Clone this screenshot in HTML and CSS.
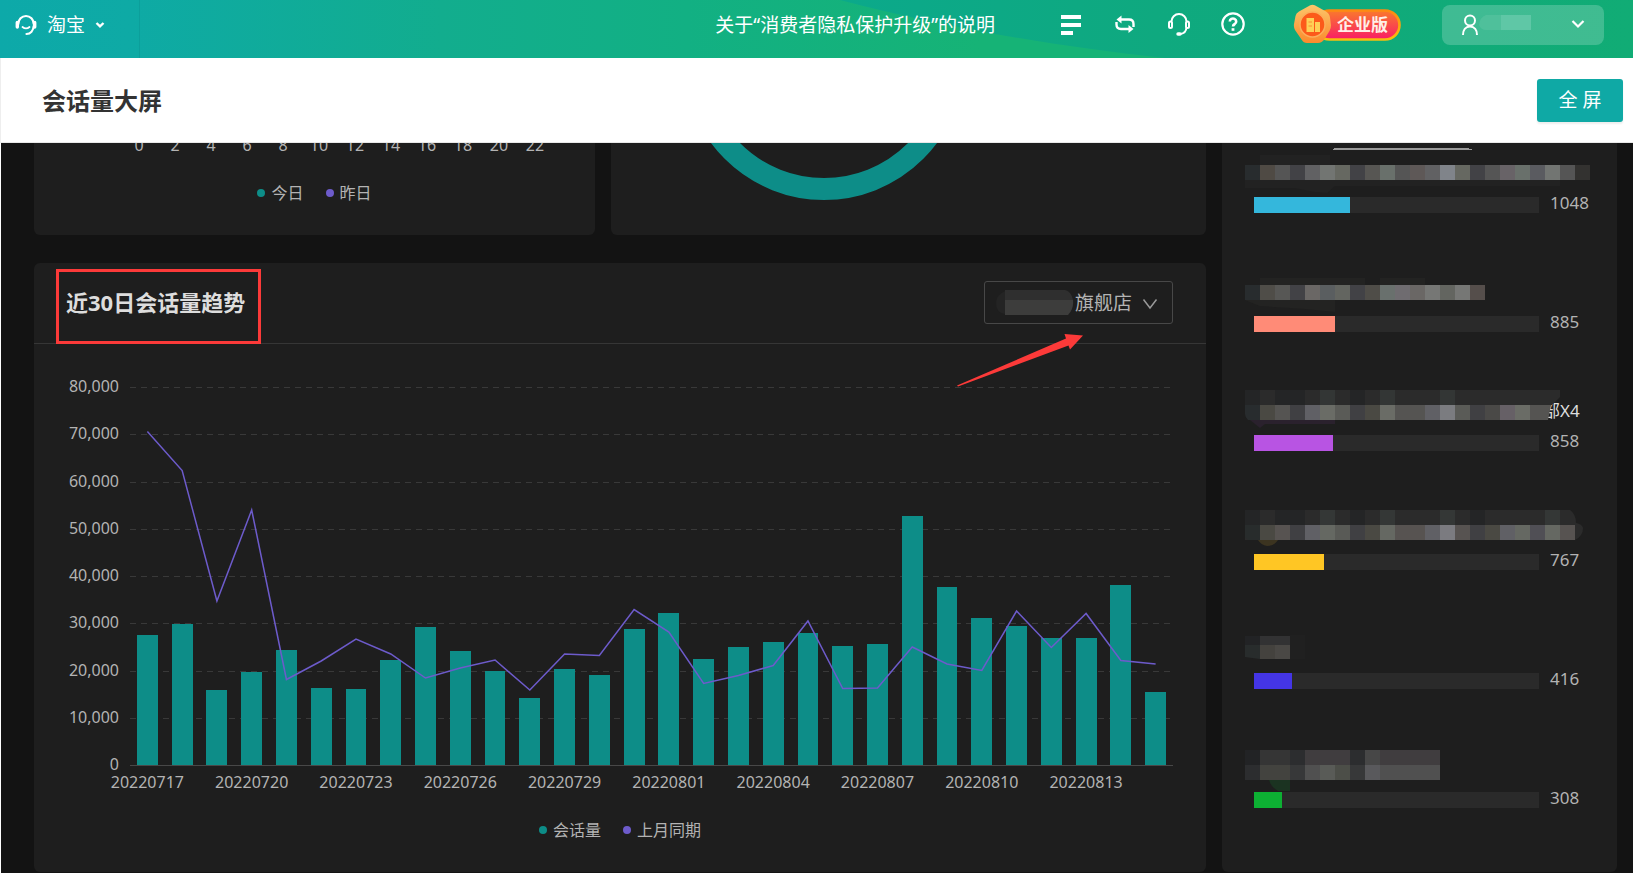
FILE: index.html
```html
<!DOCTYPE html>
<html lang="zh-CN">
<head>
<meta charset="utf-8">
<title>会话量大屏</title>
<meta name="viewport" content="width=device-width, initial-scale=1">
<link rel="stylesheet" href="styles.css">
</head>
<body>
<header class="topbar">
  <svg class="topbar-wave" viewBox="0 0 1633 58" preserveAspectRatio="none" aria-hidden="true">
    <defs><linearGradient id="wave" x1="0" x2="1"><stop offset="0" stop-color="#0ba98b"/><stop offset="0.4" stop-color="#0fa97f"/><stop offset="1" stop-color="#11ac75"/></linearGradient></defs>
    <path fill="url(#wave)" d="M840 0C940 26 1050 46 1165 58H1633V0Z"/>
  </svg>
  <button class="platform" type="button">
    <svg width="22" height="22" viewBox="0 0 22 22" fill="none" stroke="#fff" stroke-width="2.2"><path d="M3.300 10a7.700 8 0 0 1 15.400 0M18.700 12c-.4 4.600-3.200 7.800-7.200 8" stroke-linecap="round"/><path d="M7.500 13c2 1.600 5 1.600 7 0" stroke-linecap="round" stroke-width="1.800"/><path d="M2.300 8.500v4.500M19.700 8.500v4.500" stroke-width="3.400" stroke-linecap="round"/></svg>
    <span>淘宝</span>
    <svg width="10" height="8" viewBox="0 0 10 8" fill="none" stroke="#fff" stroke-width="2.400"><path d="M1.500 2 5 5.400 8.500 2"/></svg>
  </button>
  <nav class="tools">
    <a class="notice" href="#">关于“消费者隐私保护升级”的说明</a>
    <button class="tool" type="button" aria-label="菜单"><svg width="24" height="24" viewBox="0 0 24 24" fill="#fff"><path d="M2 3h20v4H2zM2 11h20v4H2zM2 19h12v4H2z"/></svg></button>
    <button class="tool" type="button" aria-label="切换"><svg width="24" height="24" viewBox="0 0 24 24" fill="none" stroke="#fff" stroke-width="2.400"><path d="M7 7.500h9q4.500 0 4.500 4.500v3M17 17H8q-4.500 0-4.500-4.500v-2.500"/><path fill="#fff" stroke="none" d="M3.500 7.500l5-4v8zM20.500 17l-5-4v8z"/></svg></button>
    <button class="tool" type="button" aria-label="客服"><svg width="24" height="24" viewBox="0 0 24 24" fill="none" stroke="#fff" stroke-width="2"><path d="M4.500 9.500a7.500 7.500 0 0 1 15 0M19.500 15.500c-.3 3.600-2.500 6-6 6.500"/><rect x="2" y="9.500" width="3" height="6.500" rx="1.500"/><rect x="19" y="9.500" width="3" height="6.500" rx="1.500"/><path d="M11 22h2" stroke-width="3.400" stroke-linecap="round"/></svg></button>
    <button class="tool" type="button" aria-label="帮助"><svg width="24" height="24" viewBox="0 0 24 24" fill="none" stroke="#fff" stroke-width="2.200"><circle cx="12" cy="12" r="10.700"/><path d="M8.800 9.500a3.200 3 0 1 1 5 2.500q-1.800 1-1.800 2.600" stroke-width="2.600"/><path d="M10.600 16.200h2.800v2.600h-2.800z" fill="#fff" stroke="none"/></svg></button>
    <a class="edition" href="#" aria-label="企业版">
      <svg width="108" height="40" viewBox="0 0 108 40">
        <defs>
          <linearGradient id="pill" x1="0" y1="0" x2="0" y2="1"><stop offset="0" stop-color="#fa7a2c"/><stop offset="1" stop-color="#f91d66"/></linearGradient>
          <linearGradient id="rim" x1="0" y1="0" x2="0" y2="1"><stop offset="0" stop-color="#fd8a12"/><stop offset="1" stop-color="#f8be0c"/></linearGradient>
          <linearGradient id="hex" x1="0" y1="0" x2="0" y2="1"><stop offset="0" stop-color="#fcc66b"/><stop offset="1" stop-color="#fb8a2c"/></linearGradient>
        </defs>
        <rect x="22" y="6.500" width="84.500" height="29" rx="14.500" fill="url(#pill)" stroke="url(#rim)" stroke-width="2.600"/>
        <path d="M15 2.500q4.500-3.500 9 0l9 5q3.500 2 4 6l1 8q0 3-1.500 5.500l-5 8Q29 39 25 39H14q-3.500 0-5.500-3.500L2 26q-1.500-3-1-6l1.500-8Q3 9 6 7.500Z" fill="url(#hex)"/>
        <circle cx="19.500" cy="20.500" r="12.500" fill="#fc5a1a" stroke="#fcae5b" stroke-width="1.500"/>
        <path d="M13.500 14h7.500v14h-7.500zM22 18h5v10h-5z" fill="#fed056"/><path d="M15.500 18h3.500M15.500 22h3.500" stroke="#fc8b30" stroke-width="1.200"/>
        <text x="44" y="27" class="edition-text">企业版</text>
      </svg>
    </a>
    <button class="account" type="button" aria-label="账户">
      <svg width="18" height="22" viewBox="0 0 18 22" fill="none" stroke="#fff" stroke-width="2"><circle cx="9" cy="6.500" r="5"/><path d="M2 21c0-5 2.500-8.500 7-8.500s7 3.500 7 8.500"/></svg>
      <svg class="account-mask" width="54" height="22"><path d="M0 11q1-8 7-10h16v15H7q-5 0-7-5Z" fill="#4fc09b"/><path d="M22 1h30v15H22Z" fill="#5fc7a6"/></svg>
      <svg width="14" height="10" viewBox="0 0 14 10" fill="none" stroke="#fff" stroke-width="2.200"><path d="M1.500 1 7 6.500 12.500 1"/></svg>
    </button>
  </nav>
</header>

<section class="titlebar">
  <h1>会话量大屏</h1>
  <button class="fullscreen" type="button">全 屏</button>
</section>

<main class="board">
  <div class="left">
    <div class="upper">
      <section class="card hours">
        <div class="hour-axis"><span>0</span><span>2</span><span>4</span><span>6</span><span>8</span><span>10</span><span>12</span><span>14</span><span>16</span><span>18</span><span>20</span><span>22</span></div>
        <div class="legend"><span class="key teal">今日</span><span class="key violet">昨日</span></div>
      </section>
      <section class="card ring">
        <svg width="284" height="92" viewBox="0 0 284 92" fill="none"><circle cx="142" cy="-83.500" r="129.500" stroke="#0d8d88" stroke-width="22"/></svg>
      </section>
    </div>
    <section class="card trend">
      <header class="trend-head">
        <h2>近30日会话量趋势</h2>
        <div class="shop">
          <select aria-label="店铺"><option>旗舰店</option></select>
          <svg class="shop-mask" width="80" height="32"><path d="M0 16q0-8 9-12h60v23H9q-9-1-9-11Z" fill="#242424"/><path d="M9 3h60q6 1 8 10H9Z" fill="#2f2f2f"/><path d="M9 13h68q1 9-5 15H9Z" fill="#3d3d3c"/></svg>
          <svg class="shop-arrow" width="16" height="12" viewBox="0 0 16 12" fill="none" stroke="#999" stroke-width="1.500"><path d="M1.500 1.500 8 10l6.500-8.500"/></svg>
        </div>
        <svg class="pointer" width="127" height="54" viewBox="0 0 127 54"><path d="M0 52.500 109 5.500 107.500 1 126 2.500 113 16.500 111.500 12.500 1 53.500Z" fill="#fc3a39"/></svg>
      </header>
      <div class="chart">
        <div class="y-axis"><span>80,000</span><span>70,000</span><span>60,000</span><span>50,000</span><span>40,000</span><span>30,000</span><span>20,000</span><span>10,000</span><span>0</span></div>
        <div class="plot">
          <div class="grid"><i></i><i></i><i></i><i></i><i></i><i></i><i></i><i></i></div>
          <div class="bars">
            <i style="height:34.4%"></i><i style="height:37.2%"></i><i style="height:19.8%"></i><i style="height:24.6%"></i><i style="height:30.3%"></i><i style="height:20.3%"></i><i style="height:20%"></i><i style="height:27.7%"></i><i style="height:36.4%"></i><i style="height:30.1%"></i>
            <i style="height:24.8%"></i><i style="height:17.6%"></i><i style="height:25.3%"></i><i style="height:23.9%"></i><i style="height:36.1%"></i><i style="height:40.1%"></i><i style="height:28.1%"></i><i style="height:31.2%"></i><i style="height:32.5%"></i><i style="height:34.8%"></i>
            <i style="height:31.4%"></i><i style="height:31.9%"></i><i style="height:66%"></i><i style="height:47.1%"></i><i style="height:38.8%"></i><i style="height:36.9%"></i><i style="height:33.5%"></i><i style="height:33.6%"></i><i style="height:47.5%"></i><i style="height:19.4%"></i>
          </div>
          <svg class="line" viewBox="0 0 60 378" preserveAspectRatio="none"><polyline points="1,44.500 3,83.500 5,214 7,123 9,292.500 11,274 13,252 15,267 17,291 19,281 21,273 23,303 25,267 27,268.500 29,222.500 31,245 33,296.500 35,288.500 37,278.500 39,234 41,301.500 43,301 45,260 47,277 49,283.500 51,224 53,260.500 55,226.500 57,273.500 59,277"/></svg>
        </div>
        <div class="x-axis"><span>20220717</span><span>20220720</span><span>20220723</span><span>20220726</span><span>20220729</span><span>20220801</span><span>20220804</span><span>20220807</span><span>20220810</span><span>20220813</span></div>
      </div>
      <div class="legend"><span class="key teal">会话量</span><span class="key violet">上月同期</span></div>
    </section>
  </div>

  <aside class="card ranks">
    <div class="rank">
      <svg class="name" aria-hidden="true"><path fill="#999" d="M89-2h135v1h3v1H88v-1h1z"/><path fill="#222" d="M0 30h90v6l-8 7-12-1-20-4H0zM90 30h225v6H90zM15 5h70v10H15z"/>
        <path fill="#282c2e" d="M0 15h15v15H0z"/><path fill="#4f4a44" d="M15 15h15v15H15z"/><path fill="#555" d="M30 15h15v15H30zM150 15h15v15h-15zM240 15h15v15h-15zM315 15h15v15h-15z"/><path fill="#424246" d="M45 15h15v15H45zM105 15h15v15h-15zM225 15h15v15h-15z"/><path fill="#616163" d="M60 15h15v15H60zM180 15h15v15h-15z"/><path fill="#727572" d="M75 15h15v15H75zM300 15h15v15h-15z"/><path fill="#666861" d="M90 15h15v15H90zM210 15h15v15h-15z"/><path fill="#575653" d="M120 15h15v15h-15z"/><path fill="#69706b" d="M135 15h15v15h-15zM270 15h15v15h-15z"/><path fill="#5e5857" d="M165 15h15v15h-15z"/><path fill="#80848a" d="M195 15h15v15h-15z"/><path fill="#686367" d="M255 15h15v15h-15z"/><path fill="#5a5b60" d="M285 15h15v15h-15z"/><path fill="#333230" d="M330 15h15v15h-15z"/></svg>
      <div class="meter"><div class="track"><i class="blue" style="width:33.7%"></i></div><span>1048</span></div>
    </div>
    <div class="rank">
      <svg class="name" aria-hidden="true"><path fill="#232322" d="M15 9h60v7H15zM75 9h45v7H75zM135 9h45v7h-45zM0 31h90v12l-30-3-45-3z"/><path fill="#282c2e" d="M0 16h15v15H0z"/><path fill="#4f4d48" d="M15 16h15v15H15zM120 16h15v15h-15z"/><path fill="#575755" d="M30 16h15v15H30z"/><path fill="#424246" d="M45 16h15v15H45zM105 16h15v15h-15z"/><path fill="#6a6765" d="M60 16h15v15H60zM165 16h15v15h-15z"/><path fill="#5a5e60" d="M75 16h15v15H75z"/><path fill="#636560" d="M90 16h15v15H90zM195 16h15v15h-15z"/><path fill="#69706d" d="M135 16h15v15h-15z"/><path fill="#6f6c70" d="M150 16h15v15h-15z"/><path fill="#767775" d="M180 16h15v15h-15zM210 16h15v15h-15z"/><path fill="#554e4b" d="M225 16h15v15h-15z"/></svg>
      <div class="meter"><div class="track"><i class="coral" style="width:28.4%"></i></div><span>885</span></div>
    </div>
    <div class="rank">
      <svg class="name"><text x="298" y="29">部X4</text><path fill="#2b2b2b" d="M0 2h315v7l-8 8H0z"/><path fill="#2a212d" d="M5 32h85v4H20l-5 4z"/><path fill="#242526" d="M0 2h15v15H0zM30 2h30v15H30zM105 2h15v15h-15z"/><path fill="#333635" d="M75 2h15v15H75zM135 2h15v15h-15zM195 2h15v15h-15z"/><path fill="#282c2e" d="M0 17h15v15H3q-3-3-3-6z"/><path fill="#4a4943" d="M15 17h15v15H15zM120 17h15v15h-15z"/><path fill="#555452" d="M30 17h15v15H30zM150 17h30v15h-30zM285 17h21l-3 15h-18z"/><path fill="#404043" d="M45 17h15v15H45zM105 17h15v15h-15zM225 17h15v15h-15z"/><path fill="#606065" d="M60 17h15v15H60zM180 17h15v15h-15z"/><path fill="#6a6c66" d="M75 17h15v15H75zM135 17h15v15h-15zM270 17h15v15h-15z"/><path fill="#5a5b57" d="M90 17h15v15H90zM210 17h15v15h-15z"/><path fill="#7b7c80" d="M195 17h15v15h-15z"/><path fill="#4a4947" d="M240 17h15v15h-15z"/><path fill="#666066" d="M255 17h15v15h-15z"/></svg>
      <div class="meter"><div class="track"><i class="purple" style="width:27.7%"></i></div><span>858</span></div>
    </div>
    <div class="rank">
      <svg class="name" aria-hidden="true"><path fill="#2b2b2b" d="M0 3h325q6 4 6 13 6 1 7 5 0 8-8 12H0z"/><path fill="#3c3420" d="M13 33h20q-4 6-11 6-6-1-9-6z"/><path fill="#242526" d="M0 3h15v15H0zM30 3h30v15H30zM105 3h15v15h-15zM225 3h15v15h-15z"/><path fill="#343736" d="M75 3h15v15H75zM135 3h15v15h-15zM195 3h15v15h-15zM300 3h15v15h-15z"/><path fill="#282c2c" d="M0 18h15v15H3l-3-3z"/><path fill="#4a4943" d="M15 18h15v15H15zM120 18h15v15h-15zM240 18h15v15h-15z"/><path fill="#575351" d="M30 18h15v15H30zM150 18h30v15h-30zM210 18h15v15h-15zM315 18h15v15h-15z"/><path fill="#404043" d="M45 18h15v15H45zM105 18h15v15h-15zM225 18h15v15h-15z"/><path fill="#606065" d="M60 18h15v15H60zM180 18h15v15h-15zM255 18h15v15h-15z"/><path fill="#656862" d="M75 18h15v15H75zM135 18h15v15h-15zM270 18h15v15h-15zM300 18h15v15h-15z"/><path fill="#595a56" d="M90 18h15v15H90z"/><path fill="#7b7b80" d="M195 18h15v15h-15z"/><path fill="#504f55" d="M285 18h15v15h-15z"/></svg>
      <div class="meter"><div class="track"><i class="amber" style="width:24.6%"></i></div><span>767</span></div>
    </div>
    <div class="rank">
      <svg class="name" aria-hidden="true"><path fill="#222325" d="M0 10h15v9H0z"/><path fill="#323233" d="M15 10h30v9H15z"/><path fill="#282c2c" d="M0 19h15v14l-15-2z"/><path fill="#44423e" d="M15 19h15v14H15z"/><path fill="#4a4845" d="M30 19h15v14H30z"/><path fill="#202020" d="M45 9h15v24H45z"/></svg>
      <div class="meter"><div class="track"><i class="indigo" style="width:13.3%"></i></div><span>416</span></div>
    </div>
    <div class="rank">
      <svg class="name" aria-hidden="true"><path fill="#222325" d="M0 5h15v15H0z"/><path fill="#353535" d="M15 5h30v15H15z"/><path fill="#2c2d2f" d="M45 5h15v15H45zM105 5h15v15h-15zM0 20h15v15H0z"/><path fill="#403d3f" d="M60 5h45v15H60zM135 5h60v15h-60z"/><path fill="#474747" d="M120 5h15v15h-15z"/><path fill="#43433f" d="M15 20h30v15H15z"/><path fill="#373839" d="M45 20h15v15H45zM105 20h15v15h-15z"/><path fill="#505050" d="M60 20h15v15H60zM135 20h60v15h-60z"/><path fill="#595b57" d="M75 20h15v15H75z"/><path fill="#4c4e48" d="M90 20h15v15H90z"/><path fill="#59595c" d="M120 20h15v15h-15z"/><path fill="#1b3321" d="M24 35h21v11H33q-7-4-9-11z"/></svg>
      <div class="meter"><div class="track"><i class="green" style="width:9.8%"></i></div><span>308</span></div>
    </div>
  </aside>
</main>
</body>
</html>
```

FILE: styles.css
```css
* { box-sizing: border-box; }
body { margin: 0; min-height: 100vh; display: flex; flex-direction: column; background: #fff; color: #b3b3b3; font: 16px/24px "Noto Sans", "Noto Sans CJK SC", sans-serif; }
button, select { font: inherit; color: inherit; border: 0; padding: 0; background: none; cursor: pointer; }
a { color: inherit; text-decoration: none; }
h1, h2 { margin: 0; }
svg { display: block; flex: none; }

.topbar { position: relative; height: 58px; display: flex; justify-content: space-between; background: linear-gradient(90deg, #0da9a9 0, #0eaaa5 8%, #12ad8e 27%, #12b083 42%, #16b376 60%); color: #fff; font-size: 19px; }
.topbar-wave { position: absolute; inset: 0; width: 100%; height: 100%; }
.platform { position: relative; width: 140px; padding: 0 0 8px 15px; display: flex; align-items: center; gap: 10px; border-right: 1px solid #0c9f9b; }
.tools { position: relative; height: 48px; display: flex; align-items: center; padding-right: 29px; }
.notice { margin-right: 64px; padding-top: 2px; white-space: nowrap; }
.tool { width: 24px; margin-right: 30px; }
.edition { margin: 0 41px 0 18px; }
.edition-text { font-size: 17px; font-weight: 700; fill: #fff0e8; }
.account { height: 40px; width: 162px; margin-top: 2px; padding: 0 19px; display: flex; align-items: center; border-radius: 8px; background: rgba(255, 255, 255, .2); }
.account-mask { margin-right: auto; }

.titlebar { height: 85px; padding: 0 10px 0 41px; display: flex; align-items: center; justify-content: space-between; border-bottom: 1px solid #e8e8e8; border-left: 1px solid #eee; }
.titlebar h1 { padding-top: 2px; font-size: 24px; line-height: 36px; color: #333; }
.fullscreen { width: 86px; height: 43px; border-radius: 3px; background: #0fa9a5; color: #fff; font-size: 19px; box-shadow: 0 2px 2px #eee; }

.board { flex: 1; margin-left: 1px; padding: 0 16px 1px 33px; display: flex; gap: 16px; background: #131313; }
.card { background: #1e1e1e; border-radius: 6px; }
.left { flex: 1; min-width: 0; display: flex; flex-direction: column; gap: 28px; }
.upper { display: grid; grid-template-columns: minmax(0, 561fr) minmax(0, 595fr); gap: 16px; }
.upper .card { height: 92px; border-radius: 0 0 6px 6px; overflow: hidden; }
.ring { padding-left: 71px; }
.hour-axis { display: grid; grid-template-columns: repeat(12, 36px); margin: -10px 0 0 87px; }
.hour-axis span { text-align: center; }
.legend { display: flex; justify-content: center; gap: 22px; }
.key { display: flex; align-items: center; gap: 6px; }
.key::before { content: ""; width: 8px; height: 8px; border-radius: 50%; }
.teal::before { background: #0d8d88; }
.violet::before { background: #6d5bcb; }
.hours .legend { margin-top: 24px; }

.trend { flex: 1; }
.trend-head { position: relative; height: 81px; padding: 6px 33px 0 22px; display: flex; justify-content: space-between; align-items: flex-start; border-bottom: 1px solid #363636; }
.trend-head h2 { height: 75px; padding: 14px 13px 0 7px; border: 3px solid #fc3a39; color: #ddd; font-size: 22px; line-height: 32px; }
.shop { position: relative; margin-top: 12px; }
.shop select { width: 189px; height: 43px; padding-left: 90px; appearance: none; border: 1px solid #484848; border-radius: 3px; font-size: 19px; }
.shop-mask { position: absolute; left: 12px; top: 6px; pointer-events: none; }
.shop-arrow { position: absolute; right: 15px; top: 17px; pointer-events: none; }
.pointer { position: absolute; right: 122px; top: 70px; }
.chart { display: grid; grid-template-columns: 84px 1fr; padding: 43px 33px 0 12px; }
.y-axis { height: 402px; margin: -13px 0 -10px; padding-right: 11px; display: flex; flex-direction: column; justify-content: space-between; text-align: right; }
.plot { position: relative; height: 379px; border-bottom: 1px solid #484848; }
.grid { height: 100%; display: grid; grid-template-rows: repeat(8, 1fr); }
.grid i { height: 1px; background: repeating-linear-gradient(90deg, #393939 0 6px, transparent 6px 11px); }
.bars { position: absolute; inset: 0; display: grid; grid-template-columns: repeat(30, 1fr); align-items: end; justify-items: center; }
.bars i { width: 60%; background: #0d8d88; }
.line { position: absolute; inset: 0; width: 100%; height: 100%; }
.line polyline { fill: none; stroke: #6d5bcb; stroke-width: 1.5; vector-effect: non-scaling-stroke; }
.x-axis { grid-column: 2; display: grid; grid-template-columns: repeat(30, 1fr); padding-top: 4px; }
.x-axis span { grid-column-end: span 3; width: 33.333%; display: flex; justify-content: center; }
.trend > .legend { margin-top: 24px; }

.ranks { flex: 0 1 395px; padding: 7px 16px 0 23px; border-radius: 0 0 6px 6px; }
.rank { height: 119px; }
.rank:last-child { height: 100px; }
.name { width: 100%; height: 49px; overflow: visible; font-size: 17px; fill: #ddd; }
.meter { display: flex; align-items: center; margin: -2px 0 0 9px; gap: 11px; font-size: 17px; line-height: 16px; }
.track { flex: 1; height: 16px; background: #2a2a2a; }
.track i { display: block; height: 100%; }
.meter span { width: 51px; padding-bottom: 5px; line-height: 10px; }
.blue { background: #34b7dc; }
.coral { background: #ff8b77; }
.purple { background: #b854e3; }
.amber { background: #ffc624; }
.indigo { background: #4435e6; }
.green { background: #0db033; }
```
